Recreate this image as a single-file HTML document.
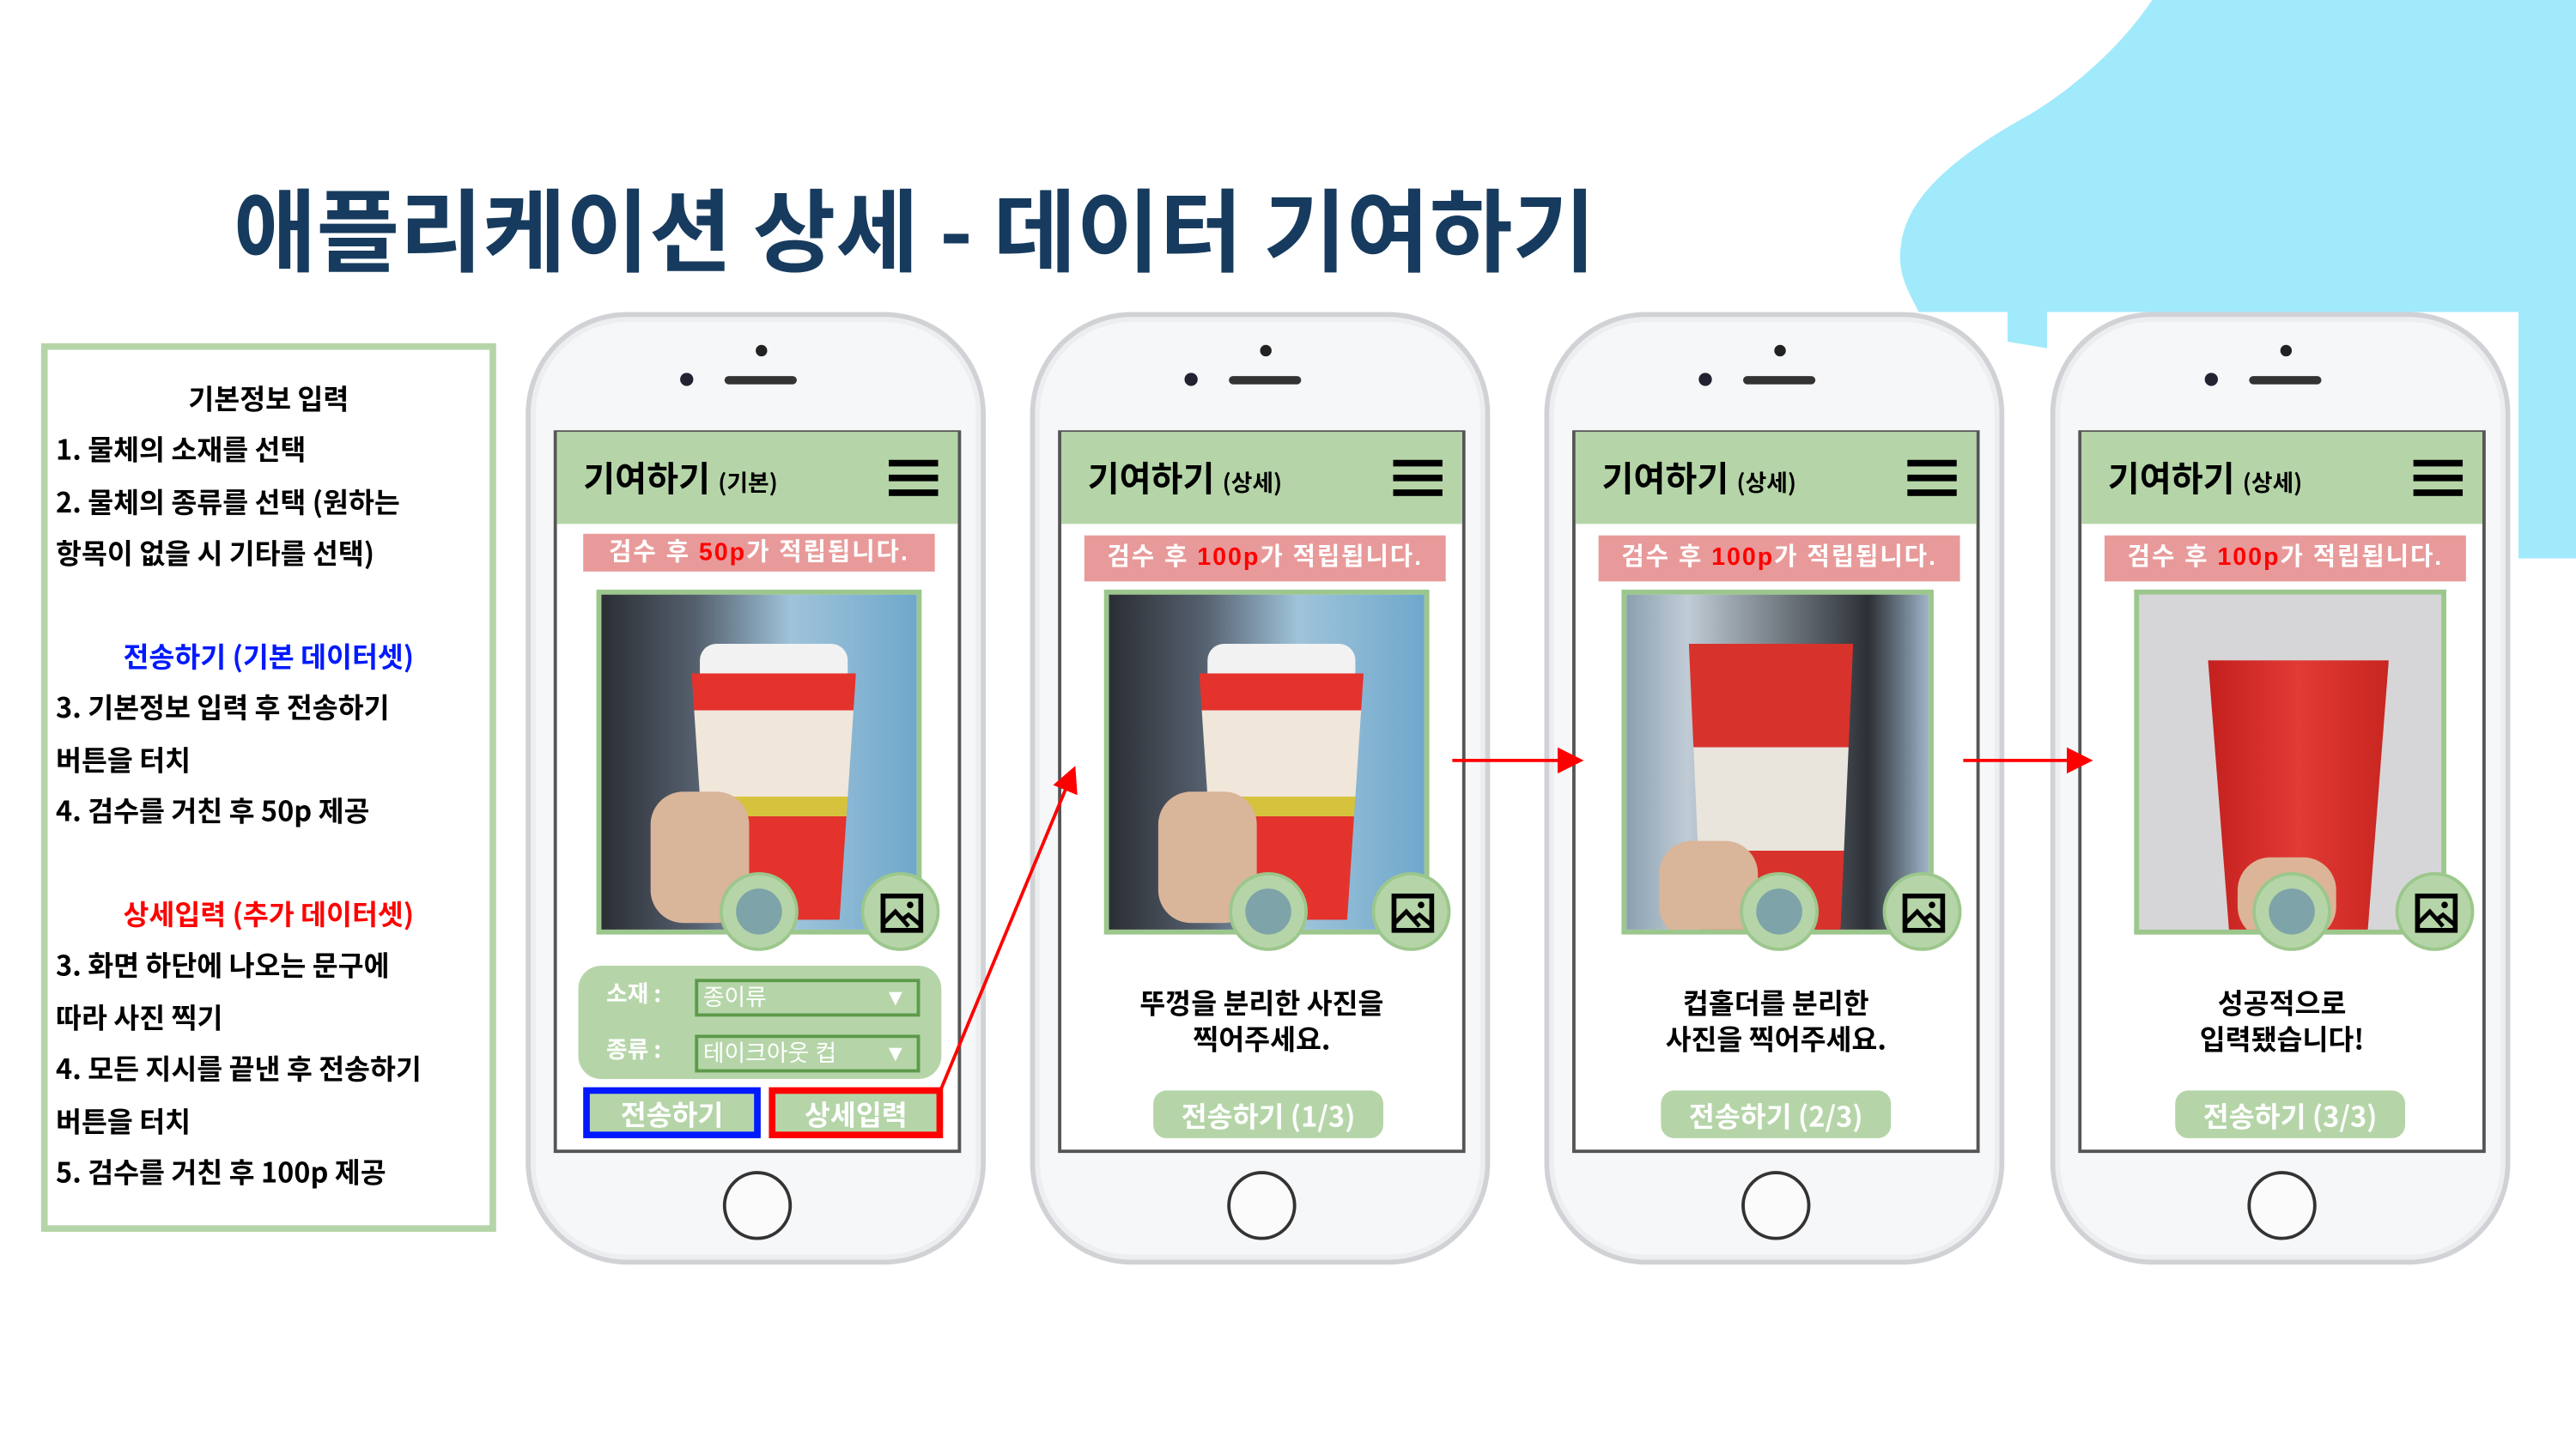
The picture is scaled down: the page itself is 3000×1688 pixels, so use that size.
<!DOCTYPE html>
<html><head><meta charset="utf-8"><style>
*{margin:0;padding:0;box-sizing:border-box}
html,body{width:3000px;height:1688px;overflow:hidden;background:#fff}
#w{position:absolute;left:0;top:0;width:1568px;height:882px;transform:scale(1.9133);transform-origin:0 0;font-family:"Liberation Sans","Noto Sans CJK KR",sans-serif}
.a{position:absolute}
h1{position:absolute;left:142px;top:97px;font-size:55px;font-weight:bold;color:#173b5e;letter-spacing:0px;white-space:nowrap;font-family:"Noto Sans CJK KR",sans-serif}
.box{left:25px;top:209px;width:277px;height:541px;border:4px solid #b5d5a8}
.box p{font-size:17px;font-weight:bold;line-height:31.4px;padding-left:5px;white-space:nowrap;font-family:"Noto Sans CJK KR",sans-serif}
.box p.c{text-align:center;padding-left:0}
.ph{top:190px;width:280px;height:580px;border-radius:62px;background:#f6f7f9;border:3px solid #d0d2d5;box-shadow:inset 0 0 0 3px #eceef0}
.dot{left:137px;top:17px;width:7px;height:7px;border-radius:50%;background:#222}
.cam{left:91px;top:34px;width:8px;height:8px;border-radius:50%;background:#223}
.spk{left:118px;top:36px;width:44px;height:5px;border-radius:3px;background:#333}
.home{left:117px;top:520px;width:42px;height:42px;border-radius:50%;border:2px solid #333;background:#fbfbfb}
.scr{left:14px;top:69px;width:248px;height:440px;border:2px solid #555;border-top:1px solid #555;background:#fff}
.hd{left:0;top:0;width:244px;height:56px;background:#b5d5a8}
.hd span{position:absolute;left:16px;top:13px;font-size:21px;font-weight:bold;font-family:"Noto Sans CJK KR",sans-serif;white-space:nowrap}
.hd small{font-size:14px}
.mn{position:absolute;right:12px;width:30px;height:3.5px;background:#000}
.bn{background:#e89a9a;color:#fff;font-size:15px;font-weight:bold;text-align:center;line-height:26px;white-space:nowrap;letter-spacing:1px}
.bn b{color:#f00}
.pic{border:3px solid #9cc78c;overflow:hidden}
.c1{width:48px;height:48px;border-radius:50%;background:#b5d5a8;border:2px solid #9cc78c}
.c1 i{position:absolute;left:8px;top:8px;width:28px;height:28px;border-radius:50%;background:#7ea3a8}
.tx{font-size:17px;font-weight:bold;text-align:center;line-height:22px;width:244px;font-family:"Noto Sans CJK KR",sans-serif}
.gb{background:#b5d5a8;color:#fff;font-size:17px;font-weight:bold;text-align:center;border-radius:8px;height:29px;line-height:29px;width:140px;font-family:"Noto Sans CJK KR",sans-serif}
</style></head><body><div id="w">
<svg class="a" style="left:0;top:0" width="1568" height="882">
<path d="M1310 0 C1290 30 1260 55 1235 70 C1190 95 1160 120 1157 150 C1155 165 1160 175 1168 190 L1222 190 L1222 208 L1246 212 L1246 190 L1533 190 L1533 340 L1568 340 L1568 0 Z" fill="#a0eafb"/>
</svg>
<h1>애플리케이션 상세 - 데이터 기여하기</h1>
<div class="a box">
<p class="c" style="margin-top:13px">기본정보 입력</p>
<p>1. 물체의 소재를 선택</p>
<p>2. 물체의 종류를 선택 (원하는</p>
<p>항목이 없을 시 기타를 선택)</p>
<p>&nbsp;</p>
<p class="c" style="color:#0019ff">전송하기 (기본 데이터셋)</p>
<p>3. 기본정보 입력 후 전송하기</p>
<p>버튼을 터치</p>
<p>4. 검수를 거친 후 50p 제공</p>
<p>&nbsp;</p>
<p class="c" style="color:#f00">상세입력 (추가 데이터셋)</p>
<p>3. 화면 하단에 나오는 문구에</p>
<p>따라 사진 찍기</p>
<p>4. 모든 지시를 끝낸 후 전송하기</p>
<p>버튼을 터치</p>
<p>5. 검수를 거친 후 100p 제공</p>
</div>

<div class="a ph" style="left:320px">
<div class="a dot"></div><div class="a cam"></div><div class="a spk"></div><div class="a home"></div>
<div class="a scr">
<div class="a hd"><span>기여하기 <small>(기본)</small></span><i class="mn" style="top:17px"></i><i class="mn" style="top:26px"></i><i class="mn" style="top:35px"></i></div>
<div class="a bn" style="left:16px;top:62px;width:214px;height:23px;line-height:23px">검수 후 <b>50p</b>가 적립됩니다.</div>
<div class="a pic" style="left:24px;top:96px;width:198px;height:210px;background:linear-gradient(90deg,#2b2e34 0%,#55606e 30%,#9fc3da 60%,#6fa8cc 100%)">
<div class="a" style="left:60px;top:30px;width:90px;height:20px;border-radius:10px 10px 2px 2px;background:#f2f2f2"></div>
<div class="a" style="left:55px;top:48px;width:100px;height:150px;background:linear-gradient(#e4322d 0 15%,#f1e6da 15% 50%,#d6c23c 50% 58%,#e4322d 58%);clip-path:polygon(0 0,100% 0,90% 100%,10% 100%)"></div>
<div class="a" style="left:30px;top:120px;width:60px;height:80px;border-radius:20px;background:#d9b59a"></div></div>
<div class="a c1" style="left:99px;top:268px"><i></i></div>
<div class="a c1" style="left:185px;top:268px"><svg class="a" style="left:10px;top:11px" width="26" height="24"><rect x="1.5" y="1.5" width="23" height="21" fill="none" stroke="#000" stroke-width="3"/><path d="M2 18 L9 11 L17 20 M13 16 L17 13 L24 19" fill="none" stroke="#000" stroke-width="2.5"/><circle cx="18" cy="7" r="2"/></svg></div>
<div class="a" style="left:13px;top:325px;width:221px;height:69px;border-radius:14px;background:#b5d5a8"></div>
<div class="a" style="left:30px;top:332px;color:#fff;font-size:14px;font-weight:bold;font-family:'Noto Sans CJK KR',sans-serif">소재 :</div>
<div class="a" style="left:30px;top:366px;color:#fff;font-size:14px;font-weight:bold;font-family:'Noto Sans CJK KR',sans-serif">종류 :</div>
<div class="a" style="left:84px;top:333px;width:137px;height:23px;border:2px solid #5c9a4a;color:#fff;font-size:14px;padding-left:3px;line-height:19px">종이류<span style="position:absolute;right:6px">▼</span></div>
<div class="a" style="left:84px;top:367px;width:137px;height:23px;border:2px solid #5c9a4a;color:#fff;font-size:14px;padding-left:3px;line-height:19px">테이크아웃 컵<span style="position:absolute;right:6px">▼</span></div>
<div class="a gb" style="left:16px;top:399px;width:108px;height:31px;border-radius:0;border:4px solid #0019ff;line-height:23px">전송하기</div>
<div class="a gb" style="left:129px;top:399px;width:106px;height:31px;border-radius:0;border:4px solid #f00;line-height:23px">상세입력</div>
</div></div>

<div class="a ph" style="left:627px">
<div class="a dot"></div><div class="a cam"></div><div class="a spk"></div><div class="a home"></div>
<div class="a scr">
<div class="a hd"><span>기여하기 <small>(상세)</small></span><i class="mn" style="top:17px"></i><i class="mn" style="top:26px"></i><i class="mn" style="top:35px"></i></div>
<div class="a bn" style="left:14px;top:63px;width:220px;height:28px;line-height:28px">검수 후 <b>100p</b>가 적립됩니다.</div>
<div class="a pic" style="left:26px;top:96px;width:198px;height:210px;background:linear-gradient(90deg,#2b2e34 0%,#55606e 30%,#9fc3da 60%,#6fa8cc 100%)">
<div class="a" style="left:60px;top:30px;width:90px;height:20px;border-radius:10px 10px 2px 2px;background:#f2f2f2"></div>
<div class="a" style="left:55px;top:48px;width:100px;height:150px;background:linear-gradient(#e4322d 0 15%,#f1e6da 15% 50%,#d6c23c 50% 58%,#e4322d 58%);clip-path:polygon(0 0,100% 0,90% 100%,10% 100%)"></div>
<div class="a" style="left:30px;top:120px;width:60px;height:80px;border-radius:20px;background:#d9b59a"></div></div>
<div class="a c1" style="left:102px;top:268px"><i></i></div>
<div class="a c1" style="left:189px;top:268px"><svg class="a" style="left:10px;top:11px" width="26" height="24"><rect x="1.5" y="1.5" width="23" height="21" fill="none" stroke="#000" stroke-width="3"/><path d="M2 18 L9 11 L17 20 M13 16 L17 13 L24 19" fill="none" stroke="#000" stroke-width="2.5"/><circle cx="18" cy="7" r="2"/></svg></div>
<div class="a tx" style="top:336px">뚜껑을 분리한 사진을<br>찍어주세요.</div>
<div class="a gb" style="left:56px;top:401px">전송하기 (1/3)</div>
</div></div>

<div class="a ph" style="left:940px">
<div class="a dot"></div><div class="a cam"></div><div class="a spk"></div><div class="a home"></div>
<div class="a scr">
<div class="a hd"><span>기여하기 <small>(상세)</small></span><i class="mn" style="top:17px"></i><i class="mn" style="top:26px"></i><i class="mn" style="top:35px"></i></div>
<div class="a bn" style="left:14px;top:63px;width:220px;height:28px;line-height:28px">검수 후 <b>100p</b>가 적립됩니다.</div>
<div class="a pic" style="left:28px;top:96px;width:190px;height:210px;background:linear-gradient(90deg,#8aa0b0 0%,#c0ccd6 20%,#2c3036 80%,#9fb4c8 100%)">
<div class="a" style="left:38px;top:30px;width:100px;height:180px;background:linear-gradient(#d8322c 0 35%,#e9e4dc 35% 70%,#d8322c 70%);clip-path:polygon(0 0,100% 0,92% 100%,8% 100%)"></div>
<div class="a" style="left:20px;top:150px;width:60px;height:60px;border-radius:20px;background:#d9b59a"></div></div>
<div class="a c1" style="left:100px;top:268px"><i></i></div>
<div class="a c1" style="left:187px;top:268px"><svg class="a" style="left:10px;top:11px" width="26" height="24"><rect x="1.5" y="1.5" width="23" height="21" fill="none" stroke="#000" stroke-width="3"/><path d="M2 18 L9 11 L17 20 M13 16 L17 13 L24 19" fill="none" stroke="#000" stroke-width="2.5"/><circle cx="18" cy="7" r="2"/></svg></div>
<div class="a tx" style="top:336px">컵홀더를 분리한<br>사진을 찍어주세요.</div>
<div class="a gb" style="left:52px;top:401px">전송하기 (2/3)</div>
</div></div>

<div class="a ph" style="left:1248px">
<div class="a dot"></div><div class="a cam"></div><div class="a spk"></div><div class="a home"></div>
<div class="a scr">
<div class="a hd"><span>기여하기 <small>(상세)</small></span><i class="mn" style="top:17px"></i><i class="mn" style="top:26px"></i><i class="mn" style="top:35px"></i></div>
<div class="a bn" style="left:14px;top:63px;width:220px;height:28px;line-height:28px">검수 후 <b>100p</b>가 적립됩니다.</div>
<div class="a pic" style="left:32px;top:96px;width:190px;height:210px;background:#d6d6d8">
<div class="a" style="left:42px;top:40px;width:110px;height:170px;background:linear-gradient(90deg,#c3201e,#e23a35 50%,#c82620);clip-path:polygon(0 0,100% 0,88% 100%,12% 100%)"></div>
<div class="a" style="left:60px;top:160px;width:60px;height:50px;border-radius:20px;background:#dcb497"></div></div>
<div class="a c1" style="left:104px;top:268px"><i></i></div>
<div class="a c1" style="left:191px;top:268px"><svg class="a" style="left:10px;top:11px" width="26" height="24"><rect x="1.5" y="1.5" width="23" height="21" fill="none" stroke="#000" stroke-width="3"/><path d="M2 18 L9 11 L17 20 M13 16 L17 13 L24 19" fill="none" stroke="#000" stroke-width="2.5"/><circle cx="18" cy="7" r="2"/></svg></div>
<div class="a tx" style="top:336px">성공적으로<br>입력됐습니다!</div>
<div class="a gb" style="left:57px;top:401px">전송하기 (3/3)</div>
</div></div>

<svg class="a" style="left:0;top:0" width="1568" height="882">
<defs><marker id="m" markerWidth="8" markerHeight="8" refX="6" refY="4" orient="auto"><path d="M0 0 L8 4 L0 8Z" fill="#f00"/></marker></defs>
<g stroke="#f00" stroke-width="2" marker-end="url(#m)">
<line x1="572" y1="665" x2="653" y2="470"/>
<line x1="884" y1="463" x2="960" y2="463"/>
<line x1="1195" y1="463" x2="1270" y2="463"/>
</g></svg>
</div></body></html>
